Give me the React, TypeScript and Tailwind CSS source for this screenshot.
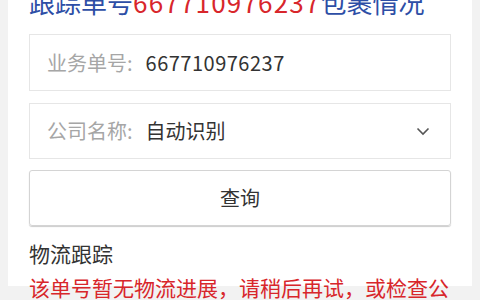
import React from "react";

export default function App() {
  const font = { fontFamily: '"Noto Sans CJK SC", "Noto Sans", sans-serif' };
  return (
    <div className="w-[480px] h-[300px] overflow-hidden bg-[#f2f2f2] px-2" style={font}>
      <div className="bg-white h-full px-[21px]">
        <div className="text-[26px] leading-[32px] -mt-[14px] text-[#2d4ea6] whitespace-nowrap">
          跟踪单号<span className="text-[#d8262b] tracking-[1.2px]">667710976237</span>包裹情况
        </div>
        <div className="mt-[16px] h-[57px] border border-[#e6e6e6] flex items-center pl-[17px] text-[20px]">
          <span className="text-[#a6a6a6]">业务单号:</span>
          <span className="ml-[13px] text-[#333] tracking-[0.5px]">667710976237</span>
        </div>
        <div className="mt-[12px] h-[56px] border border-[#e6e6e6] flex items-center pl-[17px] pr-[20px] text-[20px]">
          <span className="text-[#a6a6a6]">公司名称:</span>
          <span className="ml-[13px] text-[#333]">自动识别</span>
          <svg className="ml-auto" width="14" height="9" viewBox="0 0 14 9">
            <path d="M1.5 1.5 L7 7 L12.5 1.5" fill="none" stroke="#555" strokeWidth="1.6" />
          </svg>
        </div>
        <div className="mt-[11px] h-[56px] border border-[#d4d4d4] rounded-[3px] shadow-[0_1px_1px_rgba(0,0,0,0.2)] flex items-center justify-center text-[20px] text-[#333]">
          查询
        </div>
        <div className="mt-[12px] text-[21px] leading-[30px] text-[#333]">物流跟踪</div>
        <div className="mt-[4px] text-[21px] leading-[30px] text-[#d8262b]">
          该单号暂无物流进展，请稍后再试，或检查公司和单号是否有误。
        </div>
      </div>
    </div>
  );
}
